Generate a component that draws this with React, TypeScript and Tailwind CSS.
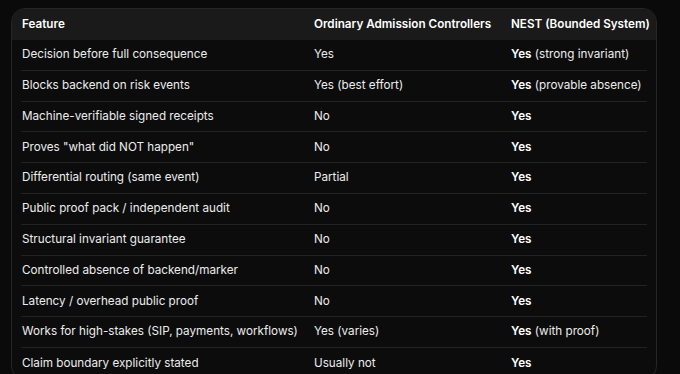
import React from 'react';

const rows = [
  { feature: 'Decision before full consequence', ordinary: 'Yes', nest: 'Yes', note: ' (strong invariant)' },
  { feature: 'Blocks backend on risk events', ordinary: 'Yes (best effort)', nest: 'Yes', note: ' (provable absence)' },
  { feature: 'Machine-verifiable signed receipts', ordinary: 'No', nest: 'Yes', note: '' },
  { feature: 'Proves "what did NOT happen"', ordinary: 'No', nest: 'Yes', note: '' },
  { feature: 'Differential routing (same event)', ordinary: 'Partial', nest: 'Yes', note: '' },
  { feature: 'Public proof pack / independent audit', ordinary: 'No', nest: 'Yes', note: '' },
  { feature: 'Structural invariant guarantee', ordinary: 'No', nest: 'Yes', note: '' },
  { feature: 'Controlled absence of backend/marker', ordinary: 'No', nest: 'Yes', note: '' },
  { feature: 'Latency / overhead public proof', ordinary: 'No', nest: 'Yes', note: '' },
  { feature: 'Works for high-stakes (SIP, payments, workflows)', ordinary: 'Yes (varies)', nest: 'Yes', note: ' (with proof)' },
  { feature: 'Claim boundary explicitly stated', ordinary: 'Usually not', nest: 'Yes', note: '' },
];

export default function App() {
  return (
    <div className="h-[374px] w-[680px] overflow-hidden bg-[#0a0a0a] pt-[8px] pl-[11px] font-['Inter','Liberation_Sans',sans-serif] text-[11.7px] whitespace-nowrap text-[#ececec]">
      <div className="w-[646px] overflow-hidden rounded-[14px] border border-[#262626] bg-[#0c0c0c]">
        <div className="bg-[#1a1a1a]">
          <div className="mx-[9px] grid h-[31px] grid-cols-[292px_197px_1fr] items-center pl-px font-semibold text-white">
            <div>Feature</div>
            <div>Ordinary Admission Controllers</div>
            <div>NEST (Bounded System)</div>
          </div>
        </div>
        {rows.map((row, i) => (
          <div
            key={i}
            className={`mx-[9px] grid h-[30.8px] grid-cols-[292px_197px_1fr] items-center pl-px ${
              i < rows.length - 1 ? 'border-b border-[#232323]' : ''
            }`}
          >
            <div>{row.feature}</div>
            <div>{row.ordinary}</div>
            <div>
              <span className="font-semibold text-white">{row.nest}</span>
              {row.note}
            </div>
          </div>
        ))}
      </div>
    </div>
  );
}
